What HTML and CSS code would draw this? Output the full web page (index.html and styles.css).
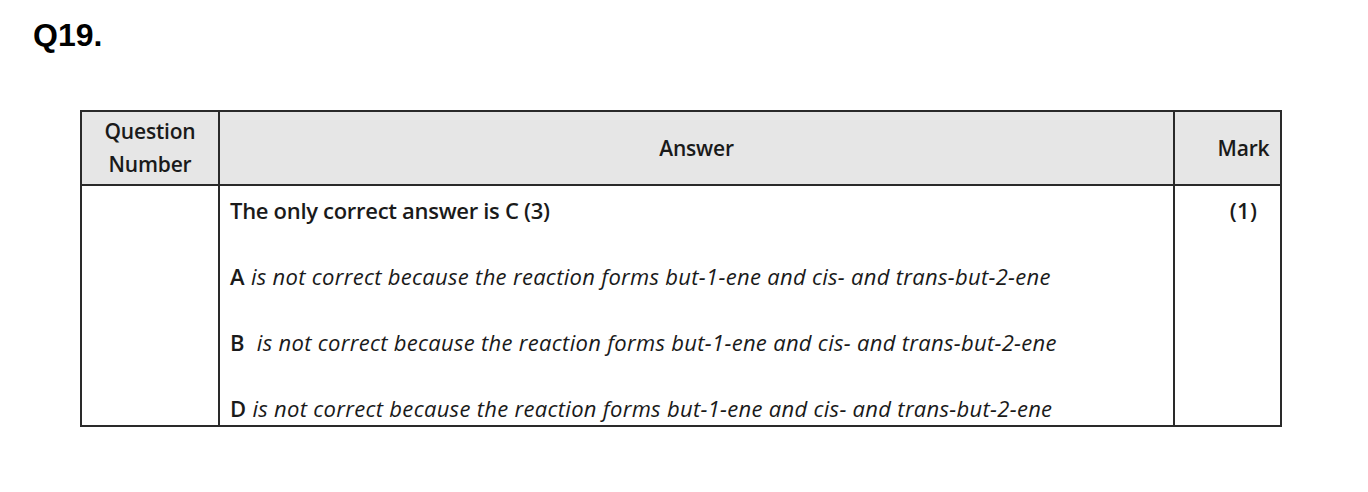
FILE: index.html
```html
<!DOCTYPE html>
<html>
<head>
<meta charset="utf-8">
<link rel="stylesheet" href="styles.css">
</head>
<body>
<h1 class="qnum">Q19.</h1>
<table class="ms">
  <thead>
    <tr>
      <th class="c-q">Question<br>Number</th>
      <th class="c-a">Answer</th>
      <th class="c-m">Mark</th>
    </tr>
  </thead>
  <tbody>
    <tr>
      <td class="c-q"></td>
      <td class="c-a">
        <p class="l1"><b class="tight">The only correct answer is C (3)</b></p>
        <p class="l"><b>A</b> <i>is not correct because the reaction forms but-1-ene and cis- and trans-but-2-ene</i></p>
        <p class="l"><b>B</b>&nbsp; <i>is not correct because the reaction forms but-1-ene and cis- and trans-but-2-ene</i></p>
        <p class="l"><b>D</b> <i>is not correct because the reaction forms but-1-ene and cis- and trans-but-2-ene</i></p>
      </td>
      <td class="c-m"><p class="l1"><b>(1)</b></p></td>
    </tr>
  </tbody>
</table>
</body>
</html>
```
FILE: styles.css
```css
html, body {
  margin: 0;
  padding: 0;
  background: #ffffff;
}
body {
  padding: 17px 0 0 33px;
  font-family: "Open Sans", "Noto Sans", sans-serif;
  color: #1a1a1a;
}
.qnum {
  margin: 0;
  font-family: "Liberation Sans", Arial, sans-serif;
  font-weight: bold;
  font-size: 32px;
  line-height: 37px;
  color: #000;
}
.ms {
  margin: 56px 0 0 47px;
  border-collapse: collapse;
  width: 1202px;
  font-size: 22px;
  letter-spacing: 0.3px;
}
.ms th, .ms td {
  border: 2px solid #2a2a2a;
  padding: 0;
}
.ms th {
  background: #e6e6e6;
  height: 72px;
  font-size: 21px;
  font-weight: 600;
  text-align: center;
  vertical-align: middle;
  line-height: 33px;
  letter-spacing: -0.2px;
}
.ms td {
  vertical-align: top;
}
.c-q { width: 136px; }
.c-m { width: 73px; }
.ms td.c-a { padding-left: 10px; }
.ms .c-m { padding-left: 32px; text-align: center; }
.l1, .l {
  margin: 0;
  line-height: 28px;
}
.l1 { padding-top: 10px; }
.l { padding-top: 38px; }
.l:last-child { padding-bottom: 3px; }
b { font-weight: 600; }
i { font-weight: 400; }
.tight { letter-spacing: -0.3px; }
```
